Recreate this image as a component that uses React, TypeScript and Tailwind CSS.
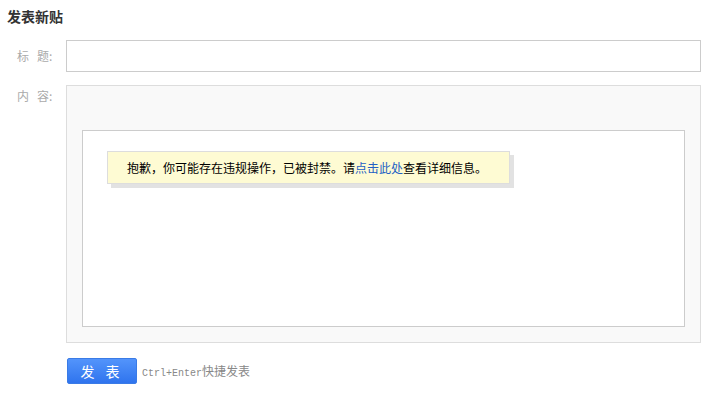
export default function App() {
  const cjk = { fontFamily: '"Noto Sans CJK SC", "Liberation Sans", sans-serif' };

  return (
    <div className="w-[712px] h-[401px] bg-white text-[#333]" style={cjk}>
      <div className="px-[7px] pt-[6px]">
        <h2 className="text-[14px] font-bold leading-[20px] text-[#333]">发表新贴</h2>
      </div>

      <div className="mt-[14px] flex items-center">
        <label className="w-[66px] pl-[17px] text-[12px] text-[#aaa] whitespace-pre">标   题:</label>
        <input
          className="w-[635px] h-[32px] border border-[#ccc] bg-white outline-none px-2 text-[13px]"
          type="text"
        />
      </div>

      <div className="mt-[13px] flex items-start">
        <label className="w-[66px] pl-[17px] pt-[2px] text-[12px] text-[#aaa] whitespace-pre">内   容:</label>
        <div className="w-[635px] h-[258px] border border-[#ddd] bg-[#f9f9f9] pt-[44px] px-[15px]">
          <div className="h-[197px] border border-[#ccc] bg-white pl-[24px] pt-[20px]">
            <div className="w-[403px] h-[33px] flex items-center pl-[19px] border border-[#ddd] bg-[#fefbd3] shadow-[4px_4px_0_#e2e2e2] text-[12px] text-black">
              抱歉，你可能存在违规操作，已被封禁。请<a href="#" className="text-[#2260c4]">点击此处</a>查看详细信息。
            </div>
          </div>
        </div>
      </div>

      <div className="mt-[15px] pl-[67px] flex items-center">
        <button className="w-[70px] h-[26px] rounded-[2px] border border-[#3a7be6] bg-gradient-to-b from-[#5394fb] to-[#2f74ee] text-white text-[14px] tracking-[4px] whitespace-pre">
          发 表
        </button>
        <span className="ml-[5px] text-[12px] text-[#888]">
          <span className="text-[10px]" style={{ fontFamily: '"Liberation Mono", monospace' }}>Ctrl+Enter</span>快捷发表
        </span>
      </div>
    </div>
  );
}
